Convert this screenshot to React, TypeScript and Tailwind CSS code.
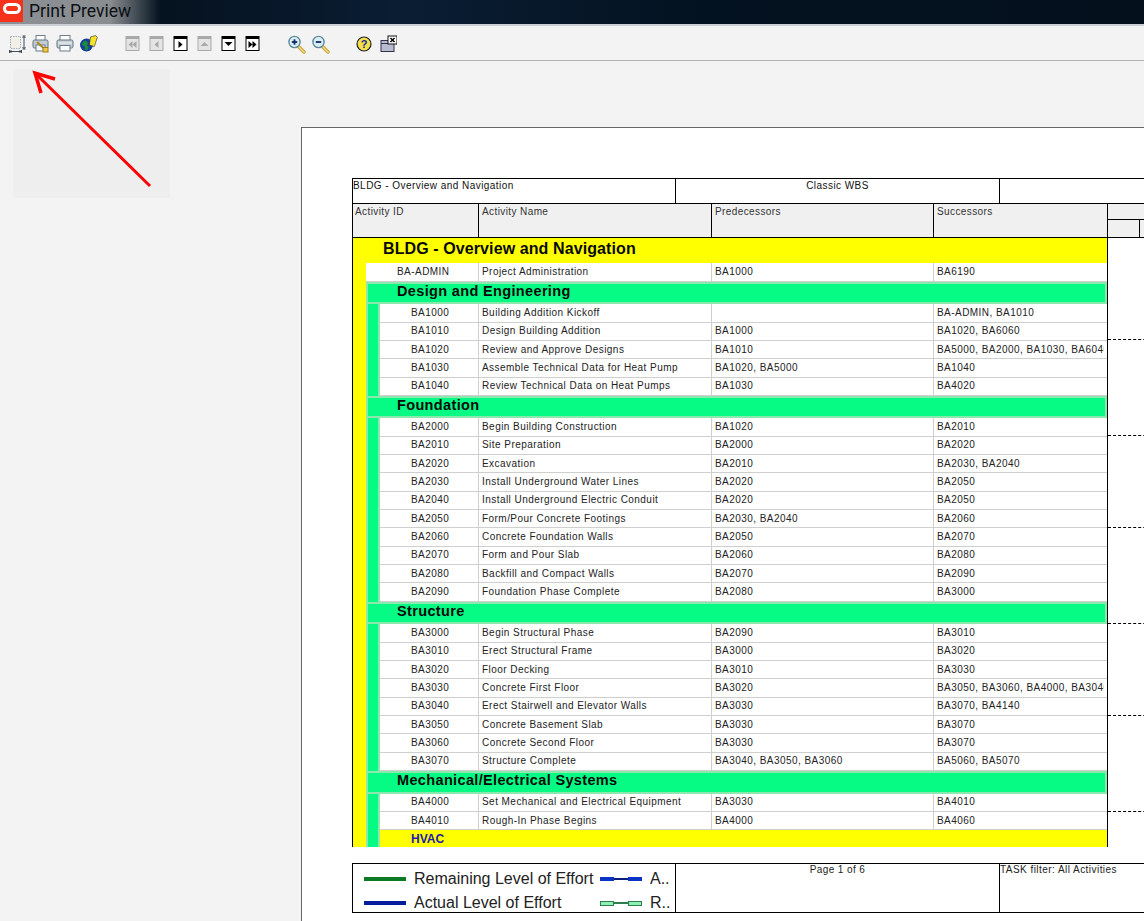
import type { JSX } from "react"

type Row = { id: string; name: string; pred: string; succ: string }

const design: Row[] = [
  { id: "BA1000", name: "Building Addition Kickoff", pred: "", succ: "BA-ADMIN, BA1010" },
  { id: "BA1010", name: "Design Building Addition", pred: "BA1000", succ: "BA1020, BA6060" },
  { id: "BA1020", name: "Review and Approve Designs", pred: "BA1010", succ: "BA5000, BA2000, BA1030, BA6040" },
  { id: "BA1030", name: "Assemble Technical Data for Heat Pump", pred: "BA1020, BA5000", succ: "BA1040" },
  { id: "BA1040", name: "Review Technical Data on Heat Pumps", pred: "BA1030", succ: "BA4020" },
]

const foundation: Row[] = [
  { id: "BA2000", name: "Begin Building Construction", pred: "BA1020", succ: "BA2010" },
  { id: "BA2010", name: "Site Preparation", pred: "BA2000", succ: "BA2020" },
  { id: "BA2020", name: "Excavation", pred: "BA2010", succ: "BA2030, BA2040" },
  { id: "BA2030", name: "Install Underground Water Lines", pred: "BA2020", succ: "BA2050" },
  { id: "BA2040", name: "Install Underground Electric Conduit", pred: "BA2020", succ: "BA2050" },
  { id: "BA2050", name: "Form/Pour Concrete Footings", pred: "BA2030, BA2040", succ: "BA2060" },
  { id: "BA2060", name: "Concrete Foundation Walls", pred: "BA2050", succ: "BA2070" },
  { id: "BA2070", name: "Form and Pour Slab", pred: "BA2060", succ: "BA2080" },
  { id: "BA2080", name: "Backfill and Compact Walls", pred: "BA2070", succ: "BA2090" },
  { id: "BA2090", name: "Foundation Phase Complete", pred: "BA2080", succ: "BA3000" },
]

const structure: Row[] = [
  { id: "BA3000", name: "Begin Structural Phase", pred: "BA2090", succ: "BA3010" },
  { id: "BA3010", name: "Erect Structural Frame", pred: "BA3000", succ: "BA3020" },
  { id: "BA3020", name: "Floor Decking", pred: "BA3010", succ: "BA3030" },
  { id: "BA3030", name: "Concrete First Floor", pred: "BA3020", succ: "BA3050, BA3060, BA4000, BA3040" },
  { id: "BA3040", name: "Erect Stairwell and Elevator Walls", pred: "BA3030", succ: "BA3070, BA4140" },
  { id: "BA3050", name: "Concrete Basement Slab", pred: "BA3030", succ: "BA3070" },
  { id: "BA3060", name: "Concrete Second Floor", pred: "BA3030", succ: "BA3070" },
  { id: "BA3070", name: "Structure Complete", pred: "BA3040, BA3050, BA3060", succ: "BA5060, BA5070" },
]

const mechanical: Row[] = [
  { id: "BA4000", name: "Set Mechanical and Electrical Equipment", pred: "BA3030", succ: "BA4010" },
  { id: "BA4010", name: "Rough-In Phase Begins", pred: "BA4000", succ: "BA4060" },
]

function Grey({ children }: { children: React.ReactNode }): JSX.Element {
  return (
    <button className="flex h-[30px] w-6 items-center justify-center">
      <svg width="20" height="20" viewBox="0 0 20 20">{children}</svg>
    </button>
  )
}

function NavButton({ kind, off }: { kind: string; off?: boolean }): JSX.Element {
  const c = off ? "#a9a9a9" : "#000000"
  return (
    <Grey>
      <rect x="3" y="2.5" width="13" height="14" fill={off ? "#e4e4e4" : "#ffffff"} stroke={c} />
      <rect x="3" y="2.5" width="13" height="2.5" fill={c} />
      {kind === "first" && <path d="M9.5 7 5.5 10.5 9.5 14ZM13.5 7 9.5 10.5 13.5 14Z" fill={c} />}
      {kind === "prev" && <path d="M11.5 7 7.5 10.5 11.5 14Z" fill={c} />}
      {kind === "next" && <path d="M7.5 7 11.5 10.5 7.5 14Z" fill={c} />}
      {kind === "up" && <path d="M5.5 12 9.5 8 13.5 12Z" fill={c} />}
      {kind === "down" && <path d="M5.5 8 9.5 12 13.5 8Z" fill={c} />}
      {kind === "last" && <path d="M5.5 7 9.5 10.5 5.5 14ZM9.5 7 13.5 10.5 9.5 14Z" fill={c} />}
    </Grey>
  )
}

function Magnifier({ plus }: { plus?: boolean }): JSX.Element {
  return (
    <Grey>
      <path d="M12.5 12.5 18 18" stroke="#c9a23a" strokeWidth="3.4" strokeLinecap="round" />
      <path d="M12.5 12.5 18 18" stroke="#f5dc86" strokeWidth="1.4" strokeLinecap="round" />
      <circle cx="8.5" cy="8" r="5.6" fill="#d9eef5" stroke="#5f8a9c" strokeWidth="1.4" />
      <path d="M5.8 8h5.4" stroke="#102a66" strokeWidth="1.8" />
      {plus && <path d="M8.5 5.3v5.4" stroke="#102a66" strokeWidth="1.8" />}
    </Grey>
  )
}

function Toolbar(): JSX.Element {
  return (
    <div className="flex h-[35px] items-center border-b border-[#b4b4b4] bg-[#f3f3f3] pl-[5px] pt-[2px]">
      <div className="flex">
        <Grey>
          <rect x="3.5" y="2.5" width="10" height="12" fill="#f1efe6" stroke="#9fb0bf" strokeDasharray="1.5 1" />
          <path d="M17 2.5v12M15.5 4 17 2.5 18.5 4M15.5 13 17 14.5 18.5 13M15.5 2h3M15.5 15h3" stroke="#2c3a46" strokeWidth="0.9" fill="none" />
          <path d="M3 17.5h11M4.5 16 3 17.5 4.5 19M12.5 16 14 17.5 12.5 19M2.5 16v3M14.5 16v3" stroke="#2c3a46" strokeWidth="0.9" fill="none" />
        </Grey>
        <Grey>
          <rect x="5" y="1.5" width="9" height="5" fill="#ffffff" stroke="#6b7f90" />
          <rect x="2" y="6" width="15" height="8" rx="1.5" fill="#c3ccd4" stroke="#62727f" />
          <rect x="5" y="11" width="9" height="6" fill="#f7f7f7" stroke="#6b7f90" />
          <path d="M6 8 13 14.5" stroke="#a88a1e" strokeWidth="2" />
          <rect x="12" y="13.5" width="5" height="4.5" fill="#f0c94a" stroke="#9c7d1a" />
        </Grey>
        <Grey>
          <rect x="5" y="1.5" width="10" height="5" fill="#ffffff" stroke="#6b7f90" />
          <rect x="2" y="6" width="16" height="8" rx="1.5" fill="#c7d0d8" stroke="#62727f" />
          <path d="M3 9h14" stroke="#eef2f5" />
          <rect x="5" y="11.5" width="10" height="5.5" fill="#fafafa" stroke="#6b7f90" />
        </Grey>
        <Grey>
          <circle cx="7.5" cy="11" r="6.5" fill="#123f9c" />
          <path d="M3.5 8 7 6.5l2 2.5-1 2.5 2 2-2 3-2.5-1.5.5-2.5-3-1.5Z" fill="#1f8a3a" />
          <path d="M11.5 3 16.5 1.5l1.8 2-3 9-5-1.5Z" fill="#f7e22c" stroke="#222222" strokeWidth="0.6" />
        </Grey>
      </div>
      <div className="ml-5 flex">
        <NavButton kind="first" off />
        <NavButton kind="prev" off />
        <NavButton kind="next" />
        <NavButton kind="up" off />
        <NavButton kind="down" />
        <NavButton kind="last" />
      </div>
      <div className="ml-[19px] flex">
        <Magnifier plus />
        <Magnifier />
      </div>
      <div className="ml-[19px] flex">
        <Grey>
          <circle cx="11" cy="10" r="7" fill="#f4e04d" stroke="#222222" strokeWidth="1.2" />
          <text x="11" y="14" textAnchor="middle" fontSize="11" fontWeight="700" fontFamily="Liberation Sans, sans-serif" fill="#1a2a8c">?</text>
        </Grey>
        <Grey>
          <rect x="4" y="6.5" width="13" height="11" fill="#b9bbd0" stroke="#33344a" />
          <path d="M4 9.5h13" stroke="#33344a" />
          <rect x="11" y="2" width="9" height="8" fill="#ffffff" stroke="#111111" />
          <path d="M13.5 4 17.5 8M17.5 4 13.5 8" stroke="#000000" strokeWidth="1.5" />
        </Grey>
      </div>
    </div>
  )
}

function TableRow({ row, admin }: { row: Row; admin?: boolean }): JSX.Element {
  return (
    <div className="flex h-[18.33px] items-center border-b border-[#cfcfcf] bg-white text-[10px] leading-none tracking-[0.45px] text-[#222222]">
      <div className={admin ? "flex h-full w-[112px] items-center pl-[31px]" : "flex h-full w-[98px] items-center pl-[31px]"}>{row.id}</div>
      <div className="flex h-full w-[233px] items-center border-l border-[#cfcfcf] pl-[3px]">{row.name}</div>
      <div className="flex h-full w-[222px] items-center border-l border-[#cfcfcf] pl-[3px]">{row.pred}</div>
      <div className="flex h-full w-[174px] items-center overflow-hidden whitespace-nowrap border-l border-[#cfcfcf] pl-[3px] pr-[3px]">
        <span className="overflow-hidden">{row.succ}</span>
      </div>
    </div>
  )
}

function Group({ title, rows }: { title: string; rows: Row[] }): JSX.Element {
  return (
    <div>
      <div className="flex h-[22.6px] items-center border-2 border-[#8ce9ae] bg-[#05fb83] pb-[3px] pl-[29px] text-[14.5px] font-bold tracking-[0.35px] text-[#0a0a0a]">
        {title}
      </div>
      <div className="flex">
        <div className="w-[14px] shrink-0 border-x-2 border-[#8ce9ae] bg-[#05fb83]" />
        <div className="min-w-0 flex-1">
          {rows.map((r) => (
            <TableRow key={r.id} row={r} />
          ))}
        </div>
      </div>
    </div>
  )
}

function Report(): JSX.Element {
  return (
    <div className="w-[900px] text-[#111111]">
      {/* top title strip */}
      <div className="flex h-[25px] border-t border-black text-[10px] leading-none tracking-[0.45px]">
        <div className="w-[323px] border-l border-black pt-[2px]">BLDG - Overview and Navigation</div>
        <div className="w-[324px] border-l border-black pt-[2px] text-center">Classic WBS</div>
        <div className="flex-1 border-l border-black" />
      </div>

      {/* column headers */}
      <div className="flex h-[35px] border-y border-black bg-[#f0f0f0] text-[10px] leading-none tracking-[0.4px] text-[#333333]">
        <div className="w-[126px] border-l border-black pl-[2px] pt-[3px]">Activity ID</div>
        <div className="w-[233px] border-l border-black pl-[3px] pt-[3px]">Activity Name</div>
        <div className="w-[222px] border-l border-black pl-[3px] pt-[3px]">Predecessors</div>
        <div className="w-[174px] border-l border-black pl-[3px] pt-[3px]">Successors</div>
        <div className="flex flex-1 flex-col border-l border-black">
          <div className="h-[16px] border-b border-black" />
          <div className="flex flex-1">
            <div className="w-[31px]" />
            <div className="flex-1 border-l border-black" />
          </div>
        </div>
      </div>

      {/* body */}
      <div className="flex">
        <div className="h-[609px] w-[756px] overflow-hidden border-x border-l-black border-r-black">
          <div className="flex h-[25.3px] items-center bg-[#ffff00] pb-[3px] pl-[30px] text-base font-bold tracking-[0.1px] text-[#0a0a0a]">
            BLDG - Overview and Navigation
          </div>
          <div className="bg-[#ffff00] pl-[13px]">
            <TableRow admin row={{ id: "BA-ADMIN", name: "Project Administration", pred: "BA1000", succ: "BA6190" }} />
            <Group title="Design and Engineering" rows={design} />
            <Group title="Foundation" rows={foundation} />
            <Group title="Structure" rows={structure} />
            <Group title="Mechanical/Electrical Systems" rows={mechanical} />
            <div className="flex">
              <div className="w-[14px] shrink-0 border-x-2 border-[#8ce9ae] bg-[#05fb83]" />
              <div className="flex h-[24px] flex-1 items-start bg-[#ffff00] pl-[31px] pt-[1px] text-xs font-bold text-[#1c1cb0]">HVAC</div>
            </div>
          </div>
        </div>

        {/* gantt area, only the dashed link lines show here */}
        <div className="flex-1">
          <div className="h-[101px]" />
          <div className="h-[96px] border-t border-dashed border-black" />
          <div className="h-[92px] border-t border-dashed border-black" />
          <div className="h-[96px] border-t border-dashed border-black" />
          <div className="h-[92px] border-t border-dashed border-black" />
          <div className="h-[96px] border-t border-dashed border-black" />
          <div className="h-[20px] border-t border-dashed border-black" />
        </div>
      </div>

      {/* footer */}
      <div className="mt-[16px] flex h-[50px] border-y border-black bg-white">
        <div className="flex w-[323px] border-l border-black pl-[11px] text-base leading-none text-[#222222]">
          <div className="flex w-[236px] flex-col gap-[6px] pt-[6px]">
            <div className="flex h-[18px] items-center gap-2">
              <div className="h-[4px] w-[42px] bg-[#0b7a24]" />
              <span>Remaining Level of Effort</span>
            </div>
            <div className="flex h-[18px] items-center gap-2">
              <div className="h-[4px] w-[42px] bg-[#031c9c]" />
              <span>Actual Level of Effort</span>
            </div>
          </div>
          <div className="flex flex-col gap-[6px] pt-[6px]">
            <div className="flex h-[18px] items-center gap-2">
              <div className="flex w-[42px] items-center">
                <div className="h-[4px] w-[14px] bg-[#0a34c4]" />
                <div className="h-[2px] flex-1 bg-[#0a1c80]" />
                <div className="h-[4px] w-[14px] bg-[#0a34c4]" />
              </div>
              <span>A..</span>
            </div>
            <div className="flex h-[18px] items-center gap-2">
              <div className="flex w-[42px] items-center">
                <div className="h-[5px] w-[14px] border border-[#2e7d4f] bg-[#8ef0b4]" />
                <div className="h-[2px] flex-1 bg-[#2e7d4f]" />
                <div className="h-[5px] w-[14px] border border-[#2e7d4f] bg-[#8ef0b4]" />
              </div>
              <span>R..</span>
            </div>
          </div>
        </div>
        <div className="w-[324px] border-l border-black pt-[1px] text-center text-[10px] leading-none tracking-[0.4px] text-[#222222]">Page 1 of 6</div>
        <div className="flex-1 border-l border-black pt-[1px] text-[10px] leading-none tracking-[0.45px] text-[#222222]">TASK filter: All Activities</div>
      </div>
    </div>
  )
}

export default function App(): JSX.Element {
  return (
    <div className="relative flex h-[921px] w-[1144px] flex-col overflow-hidden bg-[#f3f3f3] font-['Liberation_Sans',Arial,sans-serif]">
      {/* title bar */}
      <div className="flex h-[26px] items-start border-b-2 border-[#c9ced2] bg-[linear-gradient(90deg,#8d9094_0px,#8a8d90_110px,#3a444d_140px,#05121f_160px,#0a1d33_400px,#031220_700px,#04101c_1144px)]">
        <div className="flex h-[22px] w-[23px] items-start justify-center bg-[#f5331b] pt-[3px]">
          <div className="h-[11px] w-[18px] rounded-[6px] border-[3px] border-white" />
        </div>
        <span className="ml-[6px] pt-[3px] font-['Roboto',sans-serif] text-[17.5px] leading-none text-[#0c1016]">Print Preview</span>
      </div>

      <Toolbar />

      {/* preview area */}
      <div className="flex min-h-0 flex-1">
        <div className="ml-[13px] mt-[8px] h-[129px] w-[157px] shrink-0 bg-[#eeeeee]" />
        <div className="ml-[131px] mt-[66px] min-w-0 flex-1 overflow-hidden border-l border-t border-[#666666] bg-white pl-[50px] pt-[50px]">
          <Report />
        </div>
      </div>

      {/* red arrow annotation */}
      <svg className="absolute left-0 top-0" width="170" height="200" viewBox="0 0 170 200">
        <path d="M150 186 38 76" fill="none" stroke="#ff0000" strokeWidth="3" />
        <path d="M55 79 35 73 41 93" fill="none" stroke="#ff0000" strokeWidth="3.5" />
      </svg>
    </div>
  )
}
